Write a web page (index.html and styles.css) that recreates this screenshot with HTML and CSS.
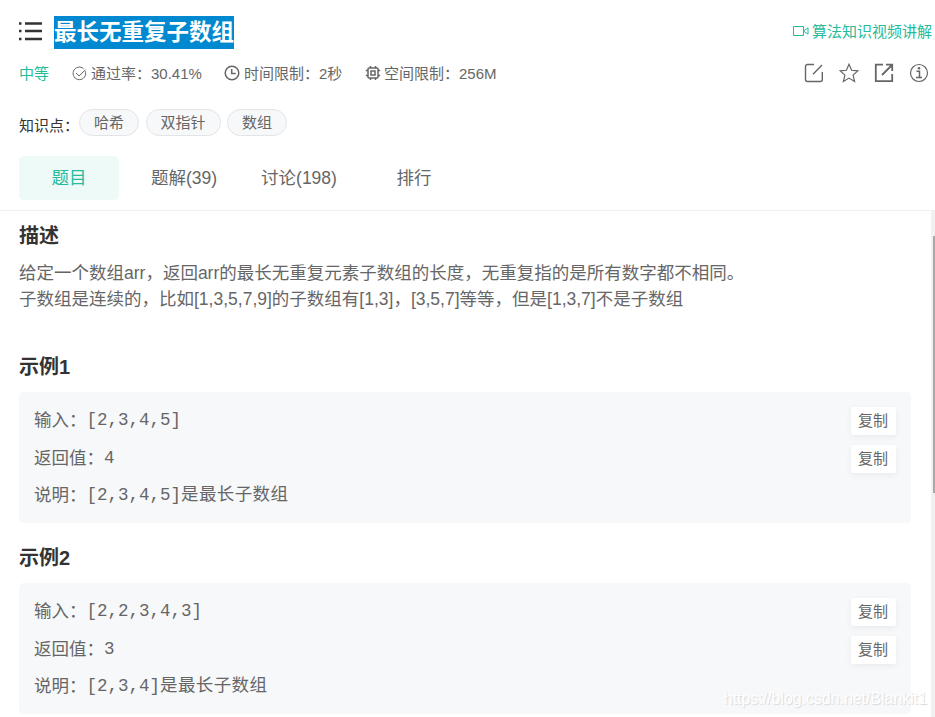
FILE: index.html
```html
<!DOCTYPE html>
<html lang="zh-CN">

<head>
    <meta charset="UTF-8">
    <meta name="viewport" content="width=device-width, initial-scale=1.0">
    <title>最长无重复子数组</title>
    <link rel="stylesheet" href="styles.css">
</head>

<body>
    <header class="header">

        <div class="title-row">
            <svg class="icon-list" width="24" height="20" viewBox="0 0 24 20">
                <path d="M0 2.5h2.5M6 2.5h17M0 10h2.5M6 10h17M0 18h2.5M6 18h17" stroke="#333" stroke-width="2.4" fill="none"/>
            </svg>
            <h1 class="title"><span class="selected">最长无重复子数组</span></h1>
            <a class="video">
                <svg width="16" height="12" viewBox="0 0 16 12" fill="none" stroke="#25bb9b">
                    <path d="M.5 1.5h10v9h-10zM10.5 6l4.5-3.2v6.4z"/>
                </svg>
                <span>算法知识视频讲解</span>
            </a>
        </div>

        <div class="meta-row">
            <span class="level">中等</span>
            <span class="meta rate">
                <svg width="15" height="15" viewBox="0 0 15 15" fill="none" stroke="#666">
                    <path d="M13.3 5.2A6.3 6.3 0 1 1 11.5 2.6M4 7l3 3 6.5-6.3"/>
                </svg>
                <span>通过率：30.41%</span>
            </span>
            <span class="meta time">
                <svg width="16" height="16" viewBox="0 0 16 16" fill="none" stroke="#666" stroke-width="1.5">
                    <circle cx="8" cy="8" r="6.8"/>
                    <path d="M7.7 4v4.5h4"/>
                </svg>
                <span>时间限制：2秒</span>
            </span>
            <span class="meta space">
                <svg width="16" height="16" viewBox="0 0 16 16" fill="none" stroke="#666" stroke-width="1.5">
                    <rect x="3" y="3" width="10" height="10" rx="1"/>
                    <rect x="6" y="6" width="4" height="4"/>
                    <path d="M5.5 1v2M10.5 1v2M5.5 13v2M10.5 13v2M.8 5.5H3M.8 10.5H3M13 5.5h2.2M13 10.5h2.2"/>
                </svg>
                <span>空间限制：256M</span>
            </span>
            <div class="tools">
                <svg width="20" height="20" viewBox="0 0 20 20" fill="none" stroke="#666" stroke-width="1.4">
                    <path d="M10 1.5H3.5a2 2 0 0 0-2 2v13a2 2 0 0 0 2 2h12.8a2 2 0 0 0 2-2V9M9 11.3l9-9.3"/>
                </svg>
                <svg width="20" height="20" viewBox="0 0 20 20" fill="none" stroke="#666" stroke-width="1.2">
                    <path d="M10 1.3l2.6 6 6.3.5-4.8 4.3 1.5 6.4L10 15.1l-5.6 3.4 1.5-6.4L1.1 7.8l6.3-.5z"/>
                </svg>
                <svg width="20" height="20" viewBox="0 0 20 20" fill="none" stroke="#666" stroke-width="1.8">
                    <path d="M9 1.7H1.8v16.5h16.4V11M12 1.7h6.2V8M18 2L8 12"/>
                </svg>
                <svg width="20" height="20" viewBox="0 0 20 20" fill="none" stroke="#666" stroke-width="1.2">
                    <circle cx="10" cy="10" r="8.5"/>
                    <path d="M7.5 8.3h3v6M7 14.5h6" stroke-width="1.5"/>
                    <circle cx="10" cy="5.3" r="1.3" fill="#666" stroke="none"/>
                </svg>
            </div>
        </div>

        <div class="tag-row">
            <span class="tag-label">知识点：</span>
            <span class="tag">哈希</span>
            <span class="tag">双指针</span>
            <span class="tag">数组</span>
        </div>

        <nav class="tabs">
            <a class="tab active">题目</a>
            <a class="tab">题解(39)</a>
            <a class="tab">讨论(198)</a>
            <a class="tab">排行</a>
        </nav>

    </header>

    <main class="main">
        <div class="content">
            <h2 class="heading">描述</h2>
            <p class="desc">给定一个数组arr，返回arr的最长无重复元素子数组的长度，无重复指的是所有数字都不相同。<br>子数组是连续的，比如[1,3,5,7,9]的子数组有[1,3]，[3,5,7]等等，但是[1,3,7]不是子数组</p>

            <h2 class="heading">示例1</h2>
            <div class="sample">
                <div class="line"><span>输入：</span><code>[2,3,4,5]</code><button class="copy">复制</button></div>
                <div class="line"><span>返回值：</span><code>4</code><button class="copy">复制</button></div>
                <div class="line"><span>说明：</span><code>[2,3,4,5]<span class="cn">是最长子数组</span></code></div>
            </div>

            <h2 class="heading">示例2</h2>
            <div class="sample">
                <div class="line"><span>输入：</span><code>[2,2,3,4,3]</code><button class="copy">复制</button></div>
                <div class="line"><span>返回值：</span><code>3</code><button class="copy">复制</button></div>
                <div class="line"><span>说明：</span><code>[2,3,4]<span class="cn">是最长子数组</span></code></div>
            </div>
        </div>
        <div class="scrollbar">
            <div class="thumb"></div>
        </div>
    </main>

    <div class="watermark">https://blog.csdn.net/Blankit1</div>
</body>

</html>
```
FILE: styles.css
```css
* {
    margin: 0;
    padding: 0;
    box-sizing: border-box;
}

body {
    display: flex;
    flex-direction: column;
    height: 717px;
    overflow: hidden;
    background-color: #fff;
    color: #666;
    font-family: "Liberation Sans", "Noto Sans CJK SC", sans-serif;
    font-size: 15px;
    white-space: nowrap;
}

svg {
    display: block;
    flex: none;
}

/* header */
.header {
    height: 211px;
    flex: none;
    padding: 16px 0 0 19px;
    border-bottom: 1px solid #f0f0f0;
}

.title-row {
    display: flex;
    align-items: center;
    height: 33px;
    padding-right: 3px;
}

.icon-list {
    margin: -3px 11px 0 0;
}

.title {
    font-size: 22.5px;
    line-height: 33px;
}

.selected {
    display: block;
    height: 33px;
    color: #fff;
    background-color: #0088d0;
}

.video {
    display: flex;
    align-items: center;
    gap: 3px;
    margin-left: auto;
    padding-bottom: 4px;
    color: #25bb9b;
}

.meta-row {
    display: flex;
    align-items: center;
    height: 24px;
    margin-top: 12px;
    padding-right: 6px;
}

.level {
    width: 53px;
    padding-bottom: 2px;
    color: #25bb9b;
}

.meta {
    display: flex;
    align-items: center;
    gap: 4px;
}

.meta span {
    padding-bottom: 2px;
}

.rate {
    width: 152px;
}

.time {
    width: 141px;
}

.space {
    gap: 3px;
}

.tools {
    display: flex;
    gap: 15px;
    margin-left: auto;
}

.tag-row {
    display: flex;
    height: 27px;
    margin-top: 24px;
}

.tag-label {
    width: 60px;
    padding-top: 5px;
    color: #333;
    line-height: 24px;
}

.tag {
    height: 27px;
    margin-right: 6.5px;
    padding: 0 14px;
    border: 1px solid #e3e4e6;
    border-radius: 14px;
    background-color: #f7f8fa;
    line-height: 25px;
}

.tabs {
    display: flex;
    gap: 15px;
    margin-top: 20px;
}

.tab {
    width: 100px;
    height: 44px;
    border-radius: 5px;
    font-size: 17.5px;
    line-height: 44px;
    text-align: center;
}

.active {
    color: #25bb9b;
    background-color: #eefaf7;
}

/* content */
.main {
    display: flex;
    flex: 1;
    min-height: 0;
}

.content {
    flex: 1;
    padding: 10px 20px 0 19px;
}

.heading {
    color: #333;
    font-size: 20px;
    line-height: 30px;
}

.desc {
    height: 83px;
    margin: 9px 0;
    font-size: 17.5px;
    line-height: 26px;
}

.sample {
    height: 131px;
    margin: 10px 0 20px;
    padding: 15px;
    border-radius: 5px;
    background-color: #f7f8fa;
    font-size: 17.5px;
}

.line {
    display: flex;
    height: 27px;
    margin-bottom: 10.5px;
    line-height: 27px;
}

code {
    font-family: "Liberation Mono", "Noto Sans CJK SC", monospace;
    font-size: 17.5px;
}

.cn {
    letter-spacing: 0.4px;
}

.copy {
    width: 45px;
    height: 28px;
    margin-left: auto;
    padding: 0 1px 3px 0;
    border: none;
    border-radius: 2px;
    background-color: #fff;
    box-shadow: 0 2px 6px rgba(0, 0, 0, 0.06);
    color: #666;
    font-family: inherit;
    font-size: 15px;
}

.scrollbar {
    width: 4px;
    padding: 25px 0 0 2px;
    background-color: #f1f1f1;
}

.thumb {
    height: 257px;
    background-color: #a8a8a8;
}

.watermark {
    position: absolute;
    right: 8px;
    bottom: 9px;
    color: #fff;
    font-size: 15.9px;
    text-shadow: 1px 1px 1px #d8d8d8;
}
```
